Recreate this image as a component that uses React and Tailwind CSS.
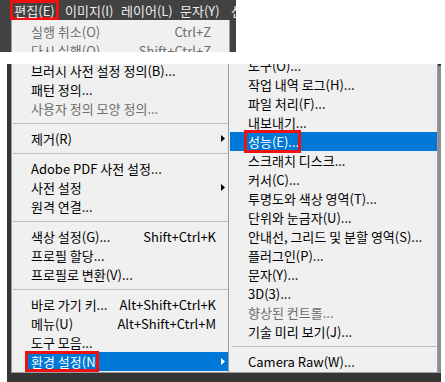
import React from "react";

function Arrow() {
  return (
    <svg width="4" height="7" viewBox="0 0 4 7" className="block">
      <path d="M0 0 L4 3.5 L0 7 Z" fill="currentColor" />
    </svg>
  );
}

function Tail({ variant, arrow }) {
  if (variant === "top") return <span className="w-[18px] shrink-0" />;
  if (variant === "left")
    return <span className="w-[12px] shrink-0 pl-[5px] flex items-center">{arrow ? <Arrow /> : null}</span>;
  return <span className="w-[12px] shrink-0" />;
}

function Item({ label, shortcut, arrow, disabled, active, box, variant }) {
  if (variant === "left" && active) {
    return (
      <div className="h-[19px] flex pl-[13px] whitespace-nowrap">
        <div className="relative flex-1 flex items-center pl-[6px] bg-[#0078d7] text-white">
          <span className="shrink-0">{label}</span>
          <span className="flex-1" />
          <Tail variant={variant} arrow={arrow} />
          {box ? <div className="absolute left-0 top-[-1px] w-[74px] h-[21px] border-[3px] border-[#ee1111]" /> : null}
        </div>
      </div>
    );
  }
  const color = active
    ? "bg-[#0078d7] text-white"
    : disabled
    ? "text-[#6d6d6d]"
    : "text-black";
  const pad = variant === "sub" ? "pl-[18px]" : "pl-[19px]";
  return (
    <div className={`relative h-[19px] flex items-center whitespace-nowrap ${pad} ${color}`}>
      <span className="shrink-0">{label}</span>
      <span className="flex-1" />
      {shortcut ? <span className="shrink-0">{shortcut}</span> : null}
      <Tail variant={variant} arrow={arrow} />
      {box ? (
        <div className="absolute left-[14px] top-[-2px] w-[57px] h-[23px] border-[3px] border-[#ee1111]" />
      ) : null}
    </div>
  );
}

function Sep({ variant }) {
  return (
    <div className={`h-[11px] flex items-center ${variant === "sub" ? "pl-[2px]" : "pl-[1px]"}`}>
      <div className="h-px w-full bg-[#bcbcbc]" />
    </div>
  );
}

const leftItems = [
  { label: "브러시 사전 설정 정의(B)..." },
  { label: "패턴 정의..." },
  { label: "사용자 정의 모양 정의...", disabled: true },
  { sep: true },
  { label: "제거(R)", arrow: true },
  { sep: true },
  { label: "Adobe PDF 사전 설정..." },
  { label: "사전 설정", arrow: true },
  { label: "원격 연결..." },
  { sep: true },
  { label: "색상 설정(G)...", shortcut: "Shift+Ctrl+K" },
  { label: "프로필 할당..." },
  { label: "프로필로 변환(V)..." },
  { sep: true },
  { label: "바로 가기 키...", shortcut: "Alt+Shift+Ctrl+K" },
  { label: "메뉴(U)", shortcut: "Alt+Shift+Ctrl+M" },
  { label: "도구 모음..." },
  { label: "환경 설정(N)", arrow: true, active: true, box: true },
];

const subItems = [
  { label: "도구(O)..." },
  { label: "작업 내역 로그(H)..." },
  { label: "파일 처리(F)..." },
  { label: "내보내기..." },
  { label: "성능(E)...", active: true, box: true },
  { label: "스크래치 디스크..." },
  { label: "커서(C)..." },
  { label: "투명도와 색상 영역(T)..." },
  { label: "단위와 눈금자(U)..." },
  { label: "안내선, 그리드 및 분할 영역(S)..." },
  { label: "플러그인(P)..." },
  { label: "문자(Y)..." },
  { label: "3D(3)..." },
  { label: "향상된 컨트롤...", disabled: true },
  { label: "기술 미리 보기(J)..." },
  { sep: true },
  { label: "Camera Raw(W)..." },
];

export default function App() {
  return (
    <div className="w-[445px] h-[382px] bg-white overflow-hidden text-[13px] leading-none font-['Noto_Sans_CJK_KR','Noto_Sans',sans-serif]">
      {/* top crop: menu bar with open Edit menu */}
      <div className="w-[236px] h-[52px] bg-[#424242] overflow-hidden">
        <div className="h-[20px] flex text-[#ededed] whitespace-nowrap">
          <div className="shrink-0 ml-[10px] w-[49px] border-[3px] border-[#ee1111] flex items-center justify-center">
            편집(E)
          </div>
          <div className="shrink-0 ml-[6px] w-[56px] flex items-center">이미지(I)</div>
          <div className="shrink-0 w-[59px] flex items-center">레이어(L)</div>
          <div className="shrink-0 w-[51px] flex items-center">문자(Y)</div>
          <div className="shrink-0 flex items-center">선택</div>
        </div>
        <div className="ml-[11px] w-[219px] h-[40px] bg-[#f0f0f0] border-l border-r border-[#a0a0a0] pt-[2px]">
          <Item label="실행 취소(O)" shortcut="Ctrl+Z" disabled variant="top" />
          <Item label="다시 실행(O)" shortcut="Shift+Ctrl+Z" disabled variant="top" />
        </div>
      </div>

      <div className="h-[12px]" />

      {/* lower crop: Edit menu with Preferences submenu */}
      <div className="flex h-[318px]">
        <div className="w-[7px] shrink-0" />
        <div className="w-[434px] shrink-0 h-[318px] bg-[#353535] pl-[4px] flex items-start">
          <div className="w-[218px] shrink-0 h-[309px] bg-[#f0f0f0] border-l border-r border-b border-[#9c9c9c] overflow-hidden">
            <div className="-mt-[3px]">
              {leftItems.map((it, i) =>
                it.sep ? <Sep key={i} variant="left" /> : <Item key={i} {...it} variant="left" />
              )}
            </div>
          </div>
          <div className="w-[209px] shrink-0 h-[309px] bg-[#f0f0f0] pl-[1px] border-r border-b border-[#9c9c9c] overflow-hidden">
            <div className="-mt-[8px]">
              {subItems.map((it, i) =>
                it.sep ? <Sep key={i} variant="sub" /> : <Item key={i} {...it} variant="sub" />
              )}
            </div>
          </div>
          <div className="w-[3px] shrink-0 h-[307px] mt-[2px] bg-[#8e8e8e]" />
        </div>
      </div>
    </div>
  );
}
